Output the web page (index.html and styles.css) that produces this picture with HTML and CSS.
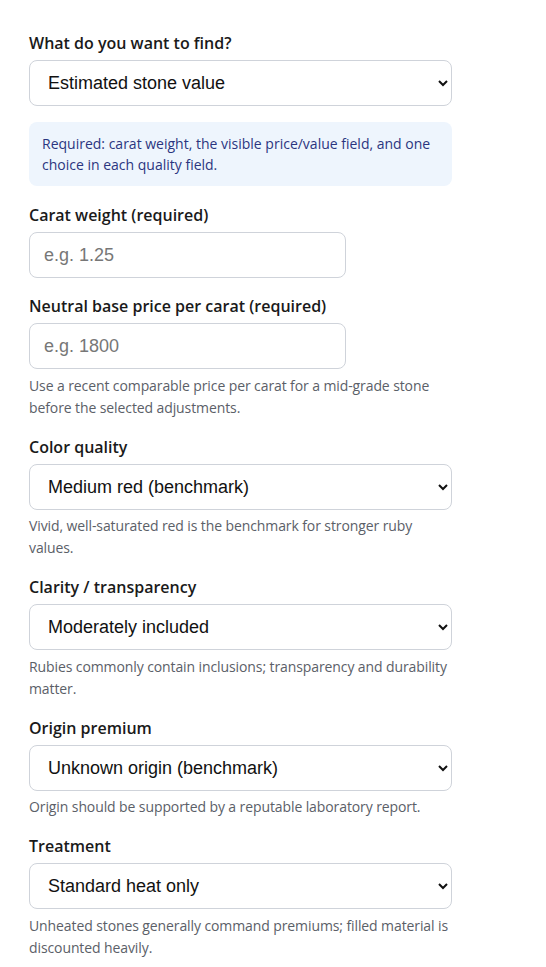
FILE: index.html
```html
<!DOCTYPE html>
<html>
<head>
  <title>Ruby value estimator</title>
  <link rel="stylesheet" href="styles.css">
</head>
<body>
  <div class="container">
    <div class="field">
      <label class="field-label" for="goal">What do you want to find?</label>
      <select id="goal" class="field-select">
        <option>Estimated stone value</option>
        <option>Price per carat</option>
      </select>
    </div>

    <div class="notice">
      Required: carat weight, the visible price/value field, and one choice in each quality field.
    </div>

    <div class="field">
      <label class="field-label" for="carat">Carat weight (required)</label>
      <input type="text" id="carat" class="field-input" placeholder="e.g. 1.25">
    </div>

    <div class="field">
      <label class="field-label" for="base">Neutral base price per carat (required)</label>
      <input type="text" id="base" class="field-input" placeholder="e.g. 1800">
      <p class="hint">Use a recent comparable price per carat for a mid-grade stone before the selected adjustments.</p>
    </div>

    <div class="field">
      <label class="field-label" for="color">Color quality</label>
      <select id="color" class="field-select">
        <option>Medium red (benchmark)</option>
      </select>
      <p class="hint">Vivid, well-saturated red is the benchmark for stronger ruby values.</p>
    </div>

    <div class="field">
      <label class="field-label" for="clarity">Clarity / transparency</label>
      <select id="clarity" class="field-select">
        <option>Moderately included</option>
      </select>
      <p class="hint">Rubies commonly contain inclusions; transparency and durability matter.</p>
    </div>

    <div class="field">
      <label class="field-label" for="origin">Origin premium</label>
      <select id="origin" class="field-select">
        <option>Unknown origin (benchmark)</option>
      </select>
      <p class="hint">Origin should be supported by a reputable laboratory report.</p>
    </div>

    <div class="field">
      <label class="field-label" for="treatment">Treatment</label>
      <select id="treatment" class="field-select">
        <option>Standard heat only</option>
      </select>
      <p class="hint">Unheated stones generally command premiums; filled material is discounted heavily.</p>
    </div>
  </div>
</body>
</html>
```

FILE: styles.css
```css
body {
  margin: 0;
  font-family: "Open Sans", "Noto Sans", sans-serif;
  background-color: #fff;
  color: #1a1a1a;
}

.container {
  width: 423px;
  padding: 31px 0 0 29px;
}

.field {
  margin-bottom: 16px;
}

.field-label {
  display: block;
  font-size: 16px;
  font-weight: 600;
  line-height: 24px;
  margin-bottom: 5px;
}

.field-select,
.field-input {
  display: block;
  box-sizing: border-box;
  height: 46px;
  border: 1px solid #cfd3da;
  border-radius: 8px;
  background-color: #fff;
  font-family: "Liberation Sans", Arial, sans-serif;
  font-size: 18px;
  color: #111;
}

.field-select {
  width: 423px;
  padding: 0 8px 0 14px;
}

.field-input {
  width: 317px;
  padding: 0 14px;
  outline: none;
}

.field-input::placeholder {
  color: #777;
}

.notice {
  background-color: #eef5fd;
  border-radius: 8px;
  padding: 11px 13px;
  margin-bottom: 17px;
  font-size: 14px;
  line-height: 21px;
  color: #2b3580;
}

.hint {
  margin: 5.5px 0 0;
  font-size: 14px;
  line-height: 22px;
  letter-spacing: -0.1px;
  color: #5b6068;
}
```
